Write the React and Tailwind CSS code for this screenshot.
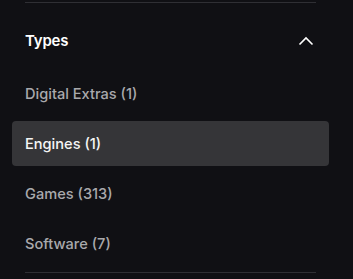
import React, { useState } from "react";

const types = [
  { name: "Digital Extras", count: 1 },
  { name: "Engines", count: 1 },
  { name: "Games", count: 313 },
  { name: "Software", count: 7 },
];

function App() {
  const [active, setActive] = useState("Engines");

  return (
    <div
      className="w-[353px] h-[279px] bg-[#101014] overflow-hidden"
      style={{ fontFamily: "Inter, 'Noto Sans', sans-serif" }}
    >
      <div className="ml-[12px] w-[317px] pt-[2px]">
        <div className="mx-[13px] h-px bg-[#2f2f34]"></div>

        <div className="mt-[19px] h-[38px] flex items-center justify-between pl-[13px] pr-[15px]">
          <h3 className="text-[15px] font-semibold text-white tracking-[-0.2px]">Types</h3>
          <svg width="16" height="10" viewBox="0 0 16 10" fill="none">
            <path
              d="M1.5 8.5 L8 2 L14.5 8.5"
              stroke="#ffffff"
              strokeWidth="1.6"
            />
          </svg>
        </div>

        <ul className="mt-[11px] flex flex-col gap-[5px]">
          {types.map((t) => (
            <li key={t.name}>
              <button
                onClick={() => setActive(t.name)}
                className={
                  "w-full h-[45px] flex items-center pl-[13px] pt-[2px] rounded-[4px] text-[14.6px] font-medium text-left " +
                  (active === t.name
                    ? "bg-[#353538] text-[#f5f5f5]"
                    : "text-[#a9a9ac]")
                }
              >
                {t.name} ({t.count})
              </button>
            </li>
          ))}
        </ul>

        <div className="mt-[6px] mx-[13px] h-px bg-[#2f2f34]"></div>
      </div>
    </div>
  );
}

export default App;
